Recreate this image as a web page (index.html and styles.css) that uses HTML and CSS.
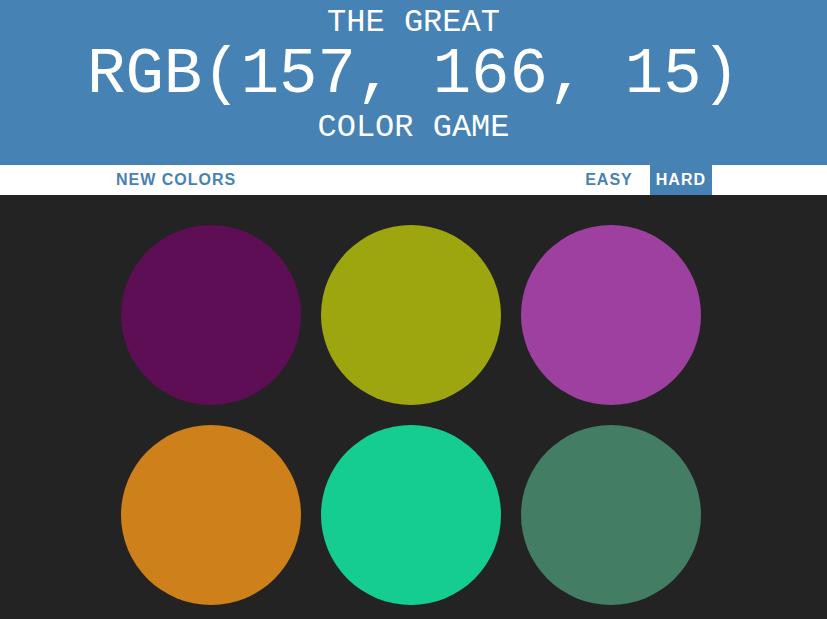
FILE: index.html
```html
<!DOCTYPE html>
<html>
<head>
<meta charset="utf-8">
<title>Color Game</title>
<link rel="stylesheet" href="styles.css">
</head>
<body>
<header class="header">
  <h1 class="title">
    <span class="title-line title-top">THE GREAT</span>
    <span class="title-line title-rgb">RGB(157, 166, 15)</span>
    <span class="title-line title-bottom">COLOR GAME</span>
  </h1>
</header>
<nav class="stripe">
  <div class="stripe-inner">
    <button class="btn">New Colors</button>
    <span class="message"></span>
    <div class="modes">
      <button class="btn">Easy</button>
      <button class="btn selected">Hard</button>
    </div>
  </div>
</nav>
<main class="container">
  <div class="square" style="background: rgb(93, 14, 85)"></div>
  <div class="square" style="background: rgb(157, 166, 15)"></div>
  <div class="square" style="background: rgb(157, 64, 160)"></div>
  <div class="square" style="background: rgb(206, 128, 26)"></div>
  <div class="square" style="background: rgb(22, 205, 145)"></div>
  <div class="square" style="background: rgb(67, 125, 99)"></div>
</main>
</body>
</html>
```
FILE: styles.css
```css
html, body {
  margin: 0;
  padding: 0;
}
body {
  background: #232323;
  font-family: "Liberation Sans", Arial, sans-serif;
  overflow: hidden;
}
.header {
  background: steelblue;
  color: #fff;
  height: 165px;
  box-sizing: border-box;
}
.title {
  margin: 0;
  font-family: "Liberation Mono", "DejaVu Sans Mono", monospace;
  font-weight: normal;
  text-align: center;
  font-size: 32px;
}
.title-line {
  display: block;
}
.title-top {
  line-height: 45px;
}
.title-rgb {
  font-size: 64px;
  line-height: 60px;
}
.title-bottom {
  line-height: 45px;
}
.stripe {
  background: #fff;
  height: 30px;
}
.stripe-inner {
  width: 602px;
  margin: 0 auto;
  height: 100%;
  display: flex;
  justify-content: space-between;
  position: relative;
  left: -2.5px;
}
.modes {
  display: flex;
  gap: 11px;
  height: 100%;
}
.btn {
  border: none;
  background: none;
  height: 100%;
  padding: 0 6px;
  font-family: "Liberation Sans", Arial, sans-serif;
  font-size: 16px;
  font-weight: 700;
  letter-spacing: 1px;
  text-transform: uppercase;
  color: steelblue;
  cursor: pointer;
}
.btn.selected {
  background: steelblue;
  color: #fff;
}
.container {
  width: 600px;
  margin: 20px auto 0;
  display: flex;
  flex-wrap: wrap;
  position: relative;
  left: -2.5px;
}
.square {
  width: 180px;
  height: 180px;
  margin: 10px;
  border-radius: 50%;
}
```
